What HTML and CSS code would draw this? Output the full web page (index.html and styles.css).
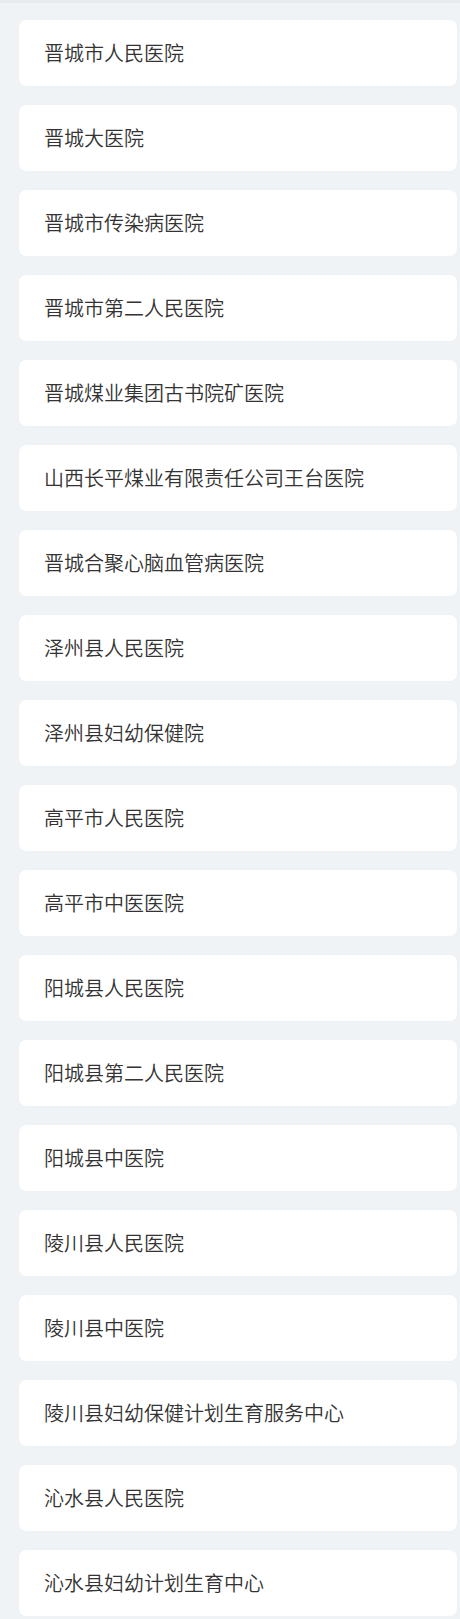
FILE: index.html
```html
<!DOCTYPE html>
<html lang="zh-CN">
<head>
<meta charset="utf-8">
<link rel="stylesheet" href="styles.css">
</head>
<body>
<div class="topbar"></div>
<ul class="list">
  <li class="card">晋城市人民医院</li>
  <li class="card">晋城大医院</li>
  <li class="card">晋城市传染病医院</li>
  <li class="card">晋城市第二人民医院</li>
  <li class="card">晋城煤业集团古书院矿医院</li>
  <li class="card">山西长平煤业有限责任公司王台医院</li>
  <li class="card">晋城合聚心脑血管病医院</li>
  <li class="card">泽州县人民医院</li>
  <li class="card">泽州县妇幼保健院</li>
  <li class="card">高平市人民医院</li>
  <li class="card">高平市中医医院</li>
  <li class="card">阳城县人民医院</li>
  <li class="card">阳城县第二人民医院</li>
  <li class="card">阳城县中医院</li>
  <li class="card">陵川县人民医院</li>
  <li class="card">陵川县中医院</li>
  <li class="card">陵川县妇幼保健计划生育服务中心</li>
  <li class="card">沁水县人民医院</li>
  <li class="card">沁水县妇幼计划生育中心</li>
</ul>
</body>
</html>
```
FILE: styles.css
```css
html, body {
  margin: 0;
  padding: 0;
  background: #f0f3f6;
}
body {
  font-family: "Noto Sans CJK SC", "Microsoft YaHei", sans-serif;
  color: #333;
}
.topbar {
  height: 3px;
  background: #e7ebee;
}
.list {
  list-style: none;
  margin: 0;
  padding: 17px 3px 0 19px;
  display: flex;
  flex-direction: column;
  gap: 19px;
}
.card {
  height: 66px;
  box-sizing: border-box;
  background: #fff;
  border-radius: 7px;
  box-shadow: 0 0 1px rgba(0, 0, 0, 0.06);
  display: flex;
  align-items: center;
  padding-left: 25px;
  padding-bottom: 1px;
  font-size: 20px;
  font-weight: 350;
  line-height: 1;
  color: #333;
}
```
